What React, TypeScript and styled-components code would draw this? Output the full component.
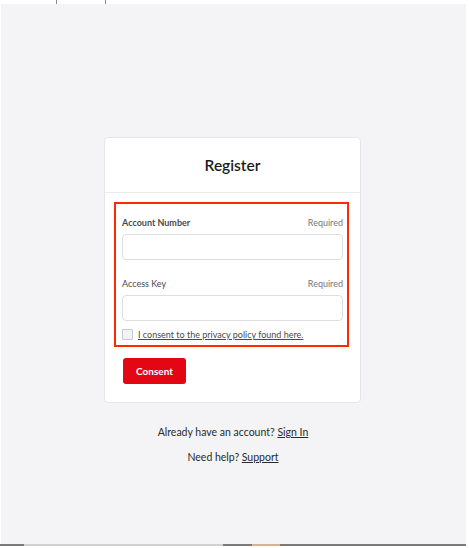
import React from "react";
import styled, { createGlobalStyle } from "styled-components";

const Global = createGlobalStyle`
  html, body { margin: 0; padding: 0; background: #ffffff; }
  body { font-family: Lato, "Noto Sans", "Liberation Sans", sans-serif; }
  * { box-sizing: border-box; }
`;

const Frame = styled.div`
  width: 469px;
  height: 548px;
  background: #ffffff;
  display: flex;
  flex-direction: column;
  overflow: hidden;
`;

const TopStrip = styled.div`
  height: 4px;
  display: flex;
`;

const TopFragment = styled.div`
  margin-left: 56px;
  width: 50px;
  height: 4px;
  border-left: 1px solid #8a8a8a;
  border-right: 1px solid #8a8a8a;
`;

const Screen = styled.div`
  margin-left: 1px;
  width: 465px;
  height: 540px;
  background: #f4f4f6;
  display: flex;
  flex-direction: column;
  align-items: center;
  padding-top: 133px;
`;

const BottomBar = styled.div`
  display: flex;
  height: 2px;
  width: 466px;
`;

const Seg = styled.div<{ $w: number; $c: string }>`
  width: ${(p) => p.$w}px;
  background: ${(p) => p.$c};
`;

const Card = styled.div`
  width: 257px;
  margin-left: -2px;
  background: #ffffff;
  border: 1px solid #e6e6ea;
  border-radius: 4px;
  display: flex;
  flex-direction: column;
`;

const CardHeader = styled.div`
  height: 55px;
  border-bottom: 1px solid #ececef;
  display: flex;
  align-items: center;
  justify-content: center;
`;

const Title = styled.h1`
  margin: 0;
  font-size: 15.5px;
  font-weight: 600;
  color: #1b1b1b;
`;

const CardBody = styled.div`
  padding: 9px 11px 18px 9px;
  display: flex;
  flex-direction: column;
  gap: 11px;
`;

const Highlight = styled.div`
  border: 2px solid #ff2a00;
  padding: 12px 4px 5px 6px;
  display: flex;
  flex-direction: column;
`;

const Field = styled.div<{ $gap?: number }>`
  display: flex;
  flex-direction: column;
  gap: 6px;
  margin-bottom: ${(p) => p.$gap ?? 0}px;
`;

const LabelRow = styled.div`
  display: flex;
  justify-content: space-between;
  align-items: center;
  height: 12px;
  font-size: 9px;
`;

const Label = styled.label<{ $strong?: boolean }>`
  font-weight: ${(p) => (p.$strong ? 700 : 400)};
  color: #4a4a4a;
`;

const Required = styled.span`
  color: #777777;
`;

const Input = styled.input`
  height: 26px;
  width: 100%;
  border: 1px solid #dedee2;
  border-radius: 4px;
  background: #ffffff;
  outline: none;
  font-family: inherit;
`;

const ConsentRow = styled.div`
  display: flex;
  align-items: center;
  gap: 5px;
  margin-top: 8px;
`;

const Box = styled.span`
  width: 11px;
  height: 11px;
  border: 1px solid #c5c9d0;
  background: #f1f3f7;
  border-radius: 1px;
`;

const ConsentText = styled.a`
  font-size: 9px;
  color: #4a4a4a;
  text-decoration: underline;
`;

const Button = styled.button`
  align-self: flex-start;
  margin-left: 9px;
  width: 63px;
  height: 26px;
  border: none;
  border-radius: 3px;
  background: #e30613;
  color: #ffffff;
  font-family: inherit;
  font-weight: 700;
  font-size: 10px;
`;

const Links = styled.div`
  margin-top: 23px;
  display: flex;
  flex-direction: column;
  align-items: center;
  gap: 12px;
  font-size: 10.5px;
  color: #2a2a2a;
  margin-left: -1px;
`;

const LinkLine = styled.p`
  margin: 0;
  line-height: 13px;
`;

const Link = styled.a`
  color: #2a2a2a;
  text-decoration: underline;
`;

export default function App() {
  return (
    <Frame>
      <Global />
      <TopStrip>
        <TopFragment />
      </TopStrip>
      <Screen>
        <Card>
          <CardHeader>
            <Title>Register</Title>
          </CardHeader>
          <CardBody>
            <Highlight>
              <Field $gap={17}>
                <LabelRow>
                  <Label $strong>Account Number</Label>
                  <Required>Required</Required>
                </LabelRow>
                <Input />
              </Field>
              <Field>
                <LabelRow>
                  <Label>Access Key</Label>
                  <Required>Required</Required>
                </LabelRow>
                <Input />
              </Field>
              <ConsentRow>
                <Box />
                <ConsentText>I consent to the privacy policy found here.</ConsentText>
              </ConsentRow>
            </Highlight>
            <Button>Consent</Button>
          </CardBody>
        </Card>
        <Links>
          <LinkLine>
            Already have an account? <Link>Sign In</Link>
          </LinkLine>
          <LinkLine>
            Need help? <Link>Support</Link>
          </LinkLine>
        </Links>
      </Screen>
      <BottomBar>
        <Seg $w={24} $c="#7a7a7a" />
        <Seg $w={199} $c="#d2d2d2" />
        <Seg $w={29} $c="#7a7a7a" />
        <Seg $w={28} $c="#d9b293" />
        <Seg $w={186} $c="#7a7a7a" />
      </BottomBar>
    </Frame>
  );
}
